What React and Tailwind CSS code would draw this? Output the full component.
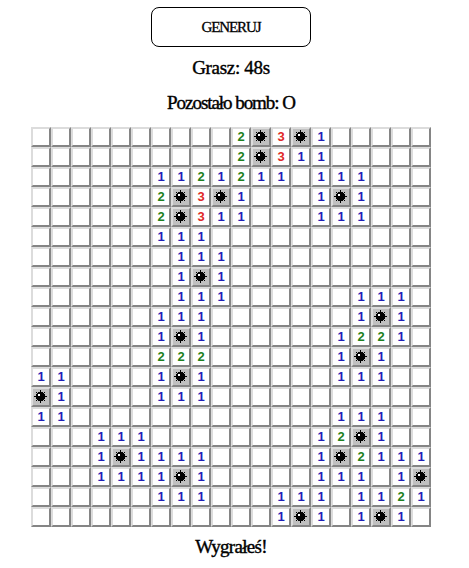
const ROWS = [
  '..........2*3*1.....',
  '..........2*311.....',
  '......1121211.111...',
  '......2*3*1...1*1...',
  '......2*311...111...',
  '......111...........',
  '.......111..........',
  '.......1*1..........',
  '.......111......111.',
  '......111.......1*1.',
  '......1*1......1221.',
  '......222......1*1..',
  '11....1*1......111..',
  '*1....111...........',
  '11.............111..',
  '...111........12*1..',
  '...1*1111.....1*2111',
  '...1111*1.....111.1*',
  '......111...111.1121',
  '............1*1.1*1.',
];

const COLORS = { 1: 'text-[#2020b8]', 2: 'text-[#208020]', 3: 'text-[#e02828]' };

function Bomb() {
  return (
    <svg className="block h-4 w-4" viewBox="0 0 16 16" shapeRendering="crispEdges">
      <path d="M7 1h1v13H7zM1 7h13v1H1zM3 3h1v1H3zM11 3h1v1h-1zM3 11h1v1H3zM11 11h1v1h-1z" />
      <path d="M5 3h5v1h1v1h1v5h-1v1h-1v1H5v-1H4v-1H3V5h1V4h1z" />
      <path d="M5 5h2v2H5z" fill="#fff" />
    </svg>
  );
}

function Cell({ value }) {
  const bomb = value === '*';
  return (
    <div
      className={`flex h-5 w-5 items-center justify-center border-2 border-t-[#dcdcdc] border-r-[#858585] border-b-[#858585] border-l-[#dcdcdc] ${
        bomb ? 'bg-[#c0c0c0]' : 'bg-white'
      } ${COLORS[value] || ''}`}
    >
      {bomb ? <Bomb /> : value === '.' ? null : value}
    </div>
  );
}

export default function App() {
  return (
    <div className="flex h-[568px] w-[462px] flex-col items-center bg-white pt-[7px] font-['Liberation_Serif',serif] text-black">
      <button className="h-10 w-40 shrink-0 rounded-lg border border-black bg-white text-[15px] font-medium tracking-[-1.1px] [-webkit-text-stroke:0.3px_black]">
        GENERUJ
      </button>
      <p className="mt-[7px] h-7 text-[19px] leading-7 tracking-[-0.3px] [-webkit-text-stroke:0.4px_black]">Grasz: 48s</p>
      <p className="mt-[7px] h-7 text-[19px] leading-7 tracking-[-1.05px] [-webkit-text-stroke:0.4px_black]">
        Pozostało bomb: O
      </p>
      <div className="mt-[10px] grid w-[400px] grid-cols-20 font-['Liberation_Sans',sans-serif] text-[13px] leading-4 font-bold">
        {ROWS.map((row, r) => row.split('').map((value, c) => <Cell key={`${r}-${c}`} value={value} />))}
      </div>
      <p className="mt-[6px] h-7 text-[19px] leading-7 tracking-[-0.7px] [-webkit-text-stroke:0.4px_black]">Wygrałeś!</p>
    </div>
  );
}
